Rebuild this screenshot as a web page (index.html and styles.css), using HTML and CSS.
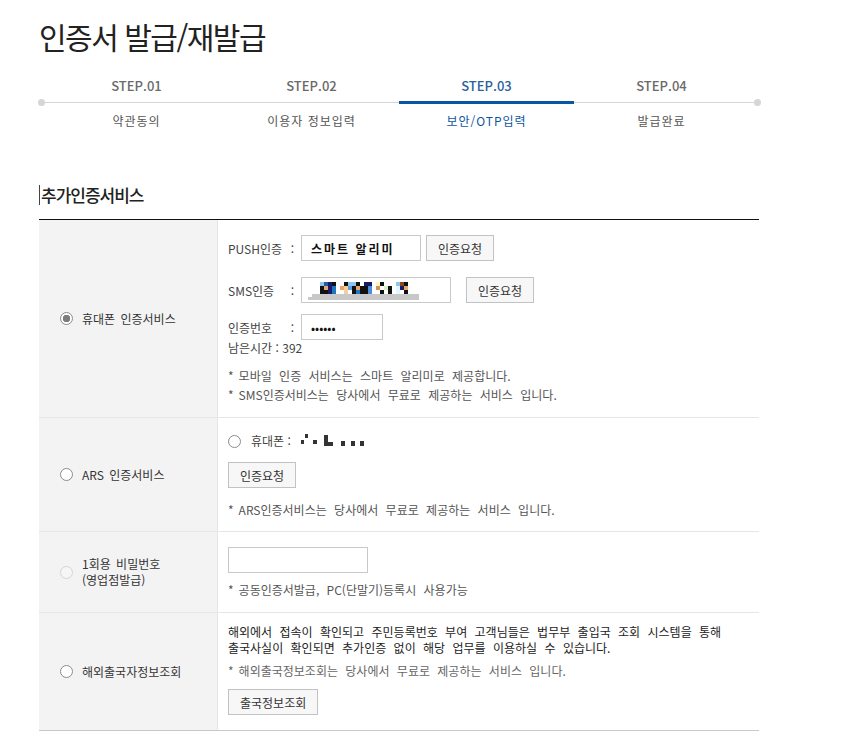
FILE: index.html
```html
<!DOCTYPE html>
<html lang="ko">
<head>
    <meta charset="UTF-8">
    <meta name="viewport" content="width=device-width, initial-scale=1.0">
    <title>인증서 발급/재발급</title>
    <link rel="stylesheet" href="styles.css">
</head>
<body>
    <div class="page">
        <h1 class="page-title">인증서 발급/재발급</h1>

        <ol class="steps">
            <li class="step"><span class="step-no">STEP.01</span><span class="step-name">약관동의</span></li>
            <li class="step"><span class="step-no">STEP.02</span><span class="step-name">이용자 정보입력</span></li>
            <li class="step active"><span class="step-no">STEP.03</span><span class="step-name">보안/OTP입력</span></li>
            <li class="step"><span class="step-no">STEP.04</span><span class="step-name">발급완료</span></li>
        </ol>

        <h2 class="section-title">추가인증서비스</h2>

        <div class="auth-table">
            <!-- 휴대폰 인증 -->
            <div class="auth-row">
                <label class="auth-type"><input type="radio" name="auth" checked> 휴대폰 인증서비스</label>
                <div class="auth-body">
                    <div class="field-row">
                        <span class="field-label">PUSH인증<span>:</span></span>
                        <input class="field push-field" type="text" value="스마트 알리미" readonly>
                        <button class="btn btn-near">인증요청</button>
                    </div>
                    <div class="field-row sms-row">
                        <span class="field-label">SMS인증<span>:</span></span>
                        <div class="field sms-field">
                            <svg width="116" height="22" viewBox="0 0 116 22">
                                <rect x="14" y="3" width="4" height="4" fill="#8ec5ef"/>
                                <rect x="14" y="7" width="4" height="8" fill="#111"/>
                                <rect x="18" y="3" width="4" height="4" fill="#1e5fa8"/>
                                <rect x="18" y="7" width="4" height="4" fill="#e8a36f"/>
                                <rect x="18" y="11" width="4" height="4" fill="#111"/>
                                <rect x="22" y="3" width="4" height="12" fill="#1a1a6a"/>
                                <rect x="26" y="3" width="4" height="4" fill="#111"/>
                                <rect x="26" y="7" width="4" height="8" fill="#1e78c0"/>
                                <rect x="34" y="7" width="4" height="4" fill="#e8a36f"/>
                                <rect x="38" y="3" width="4" height="4" fill="#111"/>
                                <rect x="38" y="7" width="4" height="8" fill="#f5cf98"/>
                                <rect x="42" y="3" width="4" height="4" fill="#8ec5ef"/>
                                <rect x="42" y="7" width="4" height="4" fill="#5aa0e0"/>
                                <rect x="46" y="3" width="4" height="4" fill="#8ec5ef"/>
                                <rect x="46" y="7" width="4" height="8" fill="#111"/>
                                <rect x="50" y="3" width="4" height="4" fill="#111"/>
                                <rect x="50" y="7" width="4" height="4" fill="#e8a36f"/>
                                <rect x="50" y="11" width="4" height="4" fill="#1e78c0"/>
                                <rect x="54" y="7" width="4" height="8" fill="#111"/>
                                <rect x="58" y="3" width="8" height="4" fill="#1a1a6a"/>
                                <rect x="58" y="7" width="4" height="8" fill="#111"/>
                                <rect x="62" y="7" width="4" height="8" fill="#4a8fd8"/>
                                <rect x="70" y="3" width="4" height="4" fill="#fff6c0"/>
                                <rect x="70" y="7" width="4" height="4" fill="#d9914f"/>
                                <rect x="74" y="3" width="4" height="4" fill="#111"/>
                                <rect x="74" y="11" width="4" height="4" fill="#111"/>
                                <rect x="78" y="7" width="4" height="4" fill="#d8f0c0"/>
                                <rect x="82" y="7" width="4" height="8" fill="#111"/>
                                <rect x="90" y="3" width="4" height="4" fill="#8ec5ef"/>
                                <rect x="90" y="7" width="4" height="8" fill="#e0f8ff"/>
                                <rect x="94" y="3" width="4" height="4" fill="#8a4a1a"/>
                                <rect x="94" y="7" width="4" height="4" fill="#1a1a6a"/>
                                <rect x="98" y="3" width="4" height="4" fill="#111"/>
                                <rect x="98" y="7" width="4" height="4" fill="#e8a36f"/>
                                <rect x="98" y="11" width="4" height="4" fill="#111"/>
                                <rect x="6" y="15" width="107" height="3" fill="#c8c8c8"/>
                                <rect x="2" y="18" width="111" height="3" fill="#c8c8c8"/>
                            </svg>
                        </div>
                        <button class="btn btn-far">인증요청</button>
                    </div>
                    <div class="field-row code-row">
                        <span class="field-label">인증번호<span>:</span></span>
                        <input class="field code-field" type="password" value="123456" readonly>
                    </div>
                    <p class="remain">남은시간 : 392</p>
                    <ul class="notes">
                        <li><span class="star">*</span>모바일 인증 서비스는 스마트 알리미로 제공합니다.</li>
                        <li><span class="star">*</span>SMS인증서비스는 당사에서 무료로 제공하는 서비스 입니다.</li>
                    </ul>
                </div>
            </div>

            <!-- ARS 인증 -->
            <div class="auth-row">
                <label class="auth-type"><input type="radio" name="auth"> ARS 인증서비스</label>
                <div class="auth-body ars-body">
                    <label class="phone-line">
                        <input type="radio" name="ars-phone">
                        휴대폰 :
                        <svg class="masked" width="66" height="14" viewBox="0 0 66 14">
                            <rect x="2" y="6" width="3" height="4" fill="#333"/>
                            <rect x="6" y="0" width="3" height="4" fill="#333"/>
                            <rect x="14" y="6" width="4" height="4" fill="#333"/>
                            <rect x="25" y="1" width="4" height="11" fill="#333"/>
                            <rect x="25" y="8" width="9" height="4" fill="#333"/>
                            <rect x="42" y="7" width="4" height="5" fill="#333"/>
                            <rect x="52" y="7" width="4" height="5" fill="#333"/>
                            <rect x="61" y="7" width="4" height="5" fill="#333"/>
                        </svg>
                    </label>
                    <button class="btn ars-btn">인증요청</button>
                    <p class="note ars-note"><span class="star">*</span>ARS인증서비스는 당사에서 무료로 제공하는 서비스 입니다.</p>
                </div>
            </div>

            <!-- OTP -->
            <div class="auth-row">
                <label class="auth-type"><input type="radio" name="auth" disabled> <span>1회용 비밀번호<br>(영업점발급)</span></label>
                <div class="auth-body otp-body">
                    <input class="field otp-field" type="text">
                    <p class="note otp-note"><span class="star">*</span>공동인증서발급, PC(단말기)등록시 사용가능</p>
                </div>
            </div>

            <!-- 해외출국자 -->
            <div class="auth-row last">
                <label class="auth-type"><input type="radio" name="auth"> 해외출국자정보조회</label>
                <div class="auth-body abroad-body">
                    <p class="desc">해외에서 접속이 확인되고 주민등록번호 부여 고객님들은 법무부 출입국 조회 시스템을 통해<br>출국사실이 확인되면 추가인증 없이 해당 업무를 이용하실 수 있습니다.</p>
                    <p class="note abroad-note"><span class="star">*</span>해외출국정보조회는 당사에서 무료로 제공하는 서비스 입니다.</p>
                    <button class="btn abroad-btn">출국정보조회</button>
                </div>
            </div>
        </div>
    </div>
</body>
</html>
```

FILE: styles.css
```css
body {
    margin: 0;
    background: #fff;
    font-family: "Noto Sans CJK KR", "Noto Sans", sans-serif;
    color: #333;
}
.page {
    width: 720px;
    padding: 14px 0 0 39px;
}
.page-title {
    margin: 0;
    font-size: 30px;
    font-weight: 400;
    line-height: 44px;
    letter-spacing: -1.5px;
    color: #222;
}

/* steps */
.steps {
    position: relative;
    display: grid;
    grid-template-columns: repeat(4, 175px);
    margin: 19px 0 0;
    padding: 0 10px;
    list-style: none;
}
.steps::before {
    content: "";
    position: absolute;
    top: 25px;
    left: 2px;
    right: 2px;
    height: 1px;
    background: #d6d6d6;
}
.steps::after {
    content: "";
    position: absolute;
    top: 22px;
    left: -1px;
    width: 7px;
    height: 7px;
    border-radius: 50%;
    background: #d6d6d6;
    box-shadow: 716px 0 0 #d6d6d6;
}
.step {
    position: relative;
    display: flex;
    flex-direction: column;
    text-align: center;
}
.step-no {
    padding-bottom: 6px;
    border-bottom: 3px solid transparent;
    font-size: 13px;
    font-weight: 500;
    line-height: 18px;
    color: #6a6a6a;
}
.step-name {
    padding-top: 8px;
    font-size: 12px;
    line-height: 18px;
    letter-spacing: 1px;
    color: #555;
}
.step.active .step-no {
    border-bottom-color: #0b56a0;
    color: #2a5f9e;
}
.step.active .step-name {
    color: #0b56a0;
}

.section-title {
    margin: 55px 0 0;
    padding-left: 1px;
    border-left: 1px solid #444;
    font-size: 17px;
    font-weight: 500;
    line-height: 20px;
    letter-spacing: -1px;
    color: #222;
}

/* auth table */
.auth-table {
    margin-top: 14px;
    border-top: 1px solid #111;
    font-size: 12px;
    word-spacing: 4px;
}
.auth-row {
    display: grid;
    grid-template-columns: 179px 1fr;
    border-bottom: 1px solid #e6e6e6;
}
.auth-row.last {
    border-bottom-color: #c8c8c8;
}
.auth-type {
    display: flex;
    align-items: center;
    gap: 9px;
    padding-left: 21px;
    background: #f3f3f3;
    border-right: 1px solid #e6e6e6;
    line-height: 16px;
    color: #333;
    word-spacing: 2px;
}
.auth-body {
    padding: 15px 10px 13px;
}
.star {
    margin-right: 5px;
}

input[type="radio"] {
    appearance: none;
    width: 13px;
    height: 13px;
    margin: 0;
    flex: none;
    border: 1px solid #8c8c8c;
    border-radius: 50%;
    background: #fff;
}
input[type="radio"]:checked {
    background: radial-gradient(circle, #7c7c7c 0 3.5px, #fff 4px);
}
input[type="radio"]:disabled {
    border-color: #d4d4d4;
    background: #f6f6f6;
}

.field-row {
    display: flex;
    align-items: center;
    height: 26px;
    word-spacing: 0;
}
.sms-row {
    margin-top: 16px;
}
.code-row {
    margin-top: 11px;
}
.field-label {
    display: flex;
    justify-content: space-between;
    width: 73px;
    padding-right: 7px;
    box-sizing: border-box;
    color: #444;
}
.field {
    height: 26px;
    box-sizing: border-box;
    margin: 0;
    border: 1px solid #c9c9c9;
    background: #fff;
    font-family: inherit;
    font-size: 12px;
}
.push-field {
    width: 120px;
    padding: 0 9px;
    font-weight: 700;
    letter-spacing: 2px;
    color: #111;
}
.sms-field {
    width: 150px;
    padding: 0 0 0 4px;
    display: flex;
    align-items: center;
}
.code-field {
    width: 82px;
    padding: 0 9px;
    color: #111;
}
.otp-field {
    display: block;
    width: 140px;
}
.btn {
    height: 26px;
    padding: 0 11px;
    border: 1px solid #c2c2c2;
    background: #f7f7f7;
    font-family: inherit;
    font-size: 12px;
    color: #333;
    cursor: pointer;
}
.btn-near {
    margin-left: 5px;
}
.btn-far {
    margin-left: 15px;
}
.remain {
    margin: 0;
    line-height: 16px;
    color: #444;
    word-spacing: 0;
}
.notes {
    margin: 10px 0 0;
    padding: 0;
    list-style: none;
    line-height: 19px;
    color: #555;
}
.note {
    margin: 0;
    color: #555;
}

.ars-body {
    padding: 15px 10px 12px;
}
.phone-line {
    display: flex;
    align-items: center;
    gap: 10px;
    line-height: 16px;
    color: #444;
    word-spacing: 0;
}
.masked {
    margin-left: -2px;
}
.ars-btn {
    display: block;
    margin-top: 13px;
}
.ars-note {
    margin-top: 13px;
    line-height: 18px;
}

.otp-body {
    padding: 15px 10px 14px;
}
.otp-note {
    margin-top: 9px;
    line-height: 16px;
}

.abroad-body {
    padding: 11px 10px 15px;
}
.desc {
    margin: 0;
    line-height: 16px;
    color: #222;
}
.abroad-note {
    margin-top: 7px;
    line-height: 16px;
    color: #666;
}
.abroad-btn {
    display: block;
    margin-top: 10px;
}
```
